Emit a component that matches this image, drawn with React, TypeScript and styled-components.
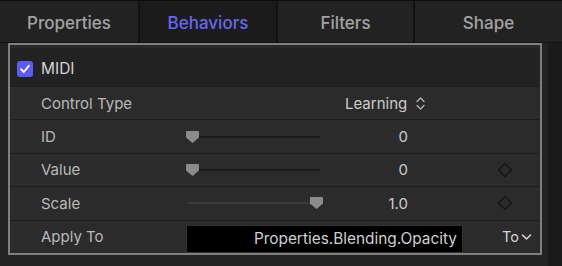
import React, { FC } from 'react';
import styled, { createGlobalStyle } from 'styled-components';

const GlobalStyle = createGlobalStyle`
    html, body {
        margin: 0;
        padding: 0;
        background: #1f1f1f;
    }
    body {
        font-family: Inter, "Liberation Sans", sans-serif;
        -webkit-font-smoothing: antialiased;
    }
`

const Page = styled.div`
    width: 562px;
    height: 266px;
    display: flex;
    flex-direction: column;
    background: #1f1f1f;
    overflow: hidden;
`

const TabBar = styled.div`
    display: grid;
    grid-template-columns: 140px 138px 137px 1fr;
    height: 43px;
    border-top: 1px solid #0d0d0d;
    border-bottom: 1px solid #121212;
    box-sizing: border-box;
`

const Tab = styled.div<{ $active?: boolean }>`
    display: flex;
    align-items: center;
    justify-content: center;
    padding-top: 2px;
    background: ${p => p.$active ? '#1b1b1b' : '#222222'};
    color: ${p => p.$active ? '#6767f0' : '#a3a3a3'};
    font-size: 17px;
    font-weight: 450;
    border-right: 2px solid #111111;

    &:last-child {
        border-right: none;
    }
`

const Body = styled.div`
    flex: 1;
    display: flex;
    padding-left: 8px;
    background: #232323;
`

const Frame = styled.div`
    width: 534px;
    height: 212px;
    box-sizing: border-box;
    border: 2px solid #7f7f7f;
    display: flex;
    flex-direction: column;
    background: #222222;
`

const Gutter = styled.div`
    flex: 1;
    margin-left: 6px;
    background: #1a1a1a;
`

const Header = styled.div`
    height: 41px;
    box-sizing: border-box;
    border-top: 3px solid #282828;
    display: flex;
    align-items: center;
    gap: 8px;
    padding: 3px 0 0 7px;
    color: #d4d4d4;
    font-size: 15.5px;
`

const Checkbox = styled.div`
    width: 16px;
    height: 16px;
    border-radius: 3px;
    background: #5d5cf0;
    display: flex;
    align-items: center;
    justify-content: center;
`

const Row = styled.div`
    height: 33.4px;
    box-sizing: border-box;
    border-top: 1px solid #1d1d1d;
    background: #2b2b2b;
    display: grid;
    grid-template-columns: 176px 136px 86px 55px 1fr;
    align-items: center;
    color: #bababa;
    font-size: 15px;
`

const Label = styled.div`
    padding-left: 31px;
`

const Slider = styled.div`
    position: relative;
    height: 14px;
    display: flex;
    align-items: center;
`

const Track = styled.div`
    height: 2px;
    width: 132px;
    margin-left: 2px;
    background: #1b1b1b;
`

const Fill = styled.div`
    height: 2px;
    background: #3b3b3b;
`

const Thumb = styled.svg`
    position: absolute;
    top: 1px;
`

const Value = styled.div`
    text-align: right;
    color: #cdcdcd;
`

const Popup = styled.div`
    grid-column: 3 / 5;
    display: flex;
    align-items: center;
    gap: 8px;
    padding-left: 23px;
    color: #cdcdcd;
`

const KeyCell = styled.div`
    grid-column: 5;
    display: flex;
    justify-content: center;
    padding-left: 6px;
`

const Field = styled.div`
    grid-column: 2 / 5;
    align-self: end;
    height: 28px;
    box-sizing: border-box;
    background: #000000;
    border: 1px solid #333333;
    display: flex;
    align-items: center;
    justify-content: flex-end;
    padding-right: 5px;
    color: #cfcfcf;
    font-size: 15.4px;
`

const ToMenu = styled.div`
    grid-column: 5;
    justify-self: end;
    margin-right: 8px;
    display: flex;
    align-items: center;
    gap: 2px;
    color: #d4d4d4;
    font-size: 14.5px;
`

const SliderControl: FC<{ pos: number }> = ({ pos }) => (
    <Slider>
        <Track>
            <Fill style={{ width: `${pos * 100}%` }} />
        </Track>
        <Thumb width="13" height="12" viewBox="0 0 13 12" style={{ left: pos * 124 }}>
            <path d="M1 0 H12 Q13 0 13 1 V6.5 L6.5 12 L0 6.5 V1 Q0 0 1 0 Z" fill="#8b8b8b" />
        </Thumb>
    </Slider>
)

const Diamond: FC = () => (
    <svg width="16" height="16" viewBox="0 0 16 16">
        <path d="M8 1.5 L14.5 8 L8 14.5 L1.5 8 Z" fill="none" stroke="#131313" strokeWidth="1.2" />
    </svg>
)

const App: FC = () => {
    return (
        <Page>
            <GlobalStyle />
            <TabBar>
                <Tab>Properties</Tab>
                <Tab $active>Behaviors</Tab>
                <Tab>Filters</Tab>
                <Tab>Shape</Tab>
            </TabBar>
            <Body>
                <Frame>
                    <Header>
                        <Checkbox>
                            <svg width="12" height="12" viewBox="0 0 12 12">
                                <path d="M2.2 6.3 L4.8 9 L9.8 2.8" fill="none" stroke="#ffffff" strokeWidth="1.9" strokeLinecap="round" strokeLinejoin="round" />
                            </svg>
                        </Checkbox>
                        MIDI
                    </Header>
                    <Row>
                        <Label>Control Type</Label>
                        <div />
                        <Popup>
                            Learning
                            <svg width="11" height="15" viewBox="0 0 11 15">
                                <path d="M2 5.5 L5.5 2 L9 5.5 M2 9.5 L5.5 13 L9 9.5" fill="none" stroke="#b5b5b5" strokeWidth="1.3" strokeLinecap="round" strokeLinejoin="round" />
                            </svg>
                        </Popup>
                    </Row>
                    <Row>
                        <Label>ID</Label>
                        <SliderControl pos={0} />
                        <Value>0</Value>
                    </Row>
                    <Row>
                        <Label>Value</Label>
                        <SliderControl pos={0} />
                        <Value>0</Value>
                        <div />
                        <KeyCell><Diamond /></KeyCell>
                    </Row>
                    <Row>
                        <Label>Scale</Label>
                        <SliderControl pos={1} />
                        <Value>1.0</Value>
                        <div />
                        <KeyCell><Diamond /></KeyCell>
                    </Row>
                    <Row>
                        <Label>Apply To</Label>
                        <Field>Properties.Blending.Opacity</Field>
                        <ToMenu>
                            To
                            <svg width="11" height="10" viewBox="0 0 11 10">
                                <path d="M1.5 3 L5.5 7 L9.5 3" fill="none" stroke="#d4d4d4" strokeWidth="1.6" strokeLinecap="round" strokeLinejoin="round" />
                            </svg>
                        </ToMenu>
                    </Row>
                </Frame>
                <Gutter />
            </Body>
        </Page>
    )
}

export default App
